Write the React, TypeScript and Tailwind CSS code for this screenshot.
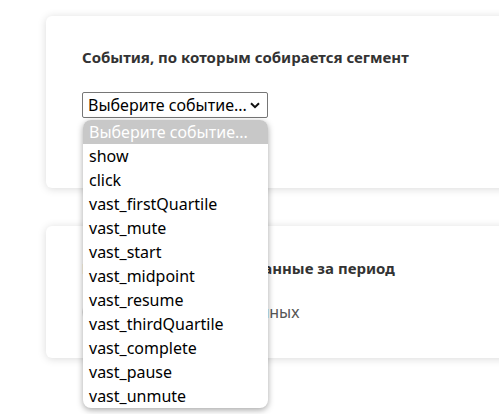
import React from "react";

const options = [
  "show",
  "click",
  "vast_firstQuartile",
  "vast_mute",
  "vast_start",
  "vast_midpoint",
  "vast_resume",
  "vast_thirdQuartile",
  "vast_complete",
  "vast_pause",
  "vast_unmute",
];

function Chevron() {
  return (
    <svg width="10" height="7" viewBox="0 0 10 7" className="shrink-0">
      <path d="M1 1.2 L5 5.2 L9 1.2" fill="none" stroke="#111" strokeWidth="2" />
    </svg>
  );
}

export default function App() {
  return (
    <div
      className="relative w-full h-[414px] overflow-hidden bg-white text-[#333]"
      style={{ fontFamily: '"Noto Sans", "Open Sans", sans-serif' }}
    >
      <div className="flex flex-col gap-[38px] pt-[16px] pl-[46px]">
        <div className="w-[600px] h-[172px] rounded-[6px] bg-white shadow-[0_1px_8px_rgba(0,0,0,0.15)] px-[36px] pt-[30px]">
          <div className="text-[15px] font-bold leading-[22px] text-[#333]">
            События, по которым собирается сегмент
          </div>
          <div className="mt-[24px] w-[186px] h-[26px] border border-[#767676] rounded-[2px] bg-white flex items-center justify-between pl-[5px] pr-[7px] text-[16px] text-black">
            <span>Выберите событие...</span>
            <Chevron />
          </div>
        </div>
        <div className="w-[600px] h-[132px] rounded-[6px] bg-white shadow-[0_1px_8px_rgba(0,0,0,0.15)] px-[36px] pt-[32px]">
          <div className="text-[15px] font-bold leading-[20px] text-[#333]">
            Включать в сегменты данные за период
          </div>
          <div className="mt-[24px] flex items-center gap-[4px]">
            <div className="w-[36px] h-[20px] rounded-[10px] bg-[#e4e4e4]" />
            <span className="text-[16px] leading-[20px] text-[#555]">Нет доступных данных</span>
          </div>
        </div>
      </div>

      <div className="absolute left-[83px] top-[120px] w-[185px] rounded-[8px] bg-white shadow-[0_2px_6px_rgba(0,0,0,0.35)] overflow-hidden text-[16px] text-black">
        <div className="h-[24px] leading-[24px] pl-[6px] bg-[#c8c8c8] text-white">Выберите событие...</div>
        {options.map((o) => (
          <div key={o} className="h-[24px] leading-[24px] pl-[6px]">
            {o}
          </div>
        ))}
      </div>
    </div>
  );
}
